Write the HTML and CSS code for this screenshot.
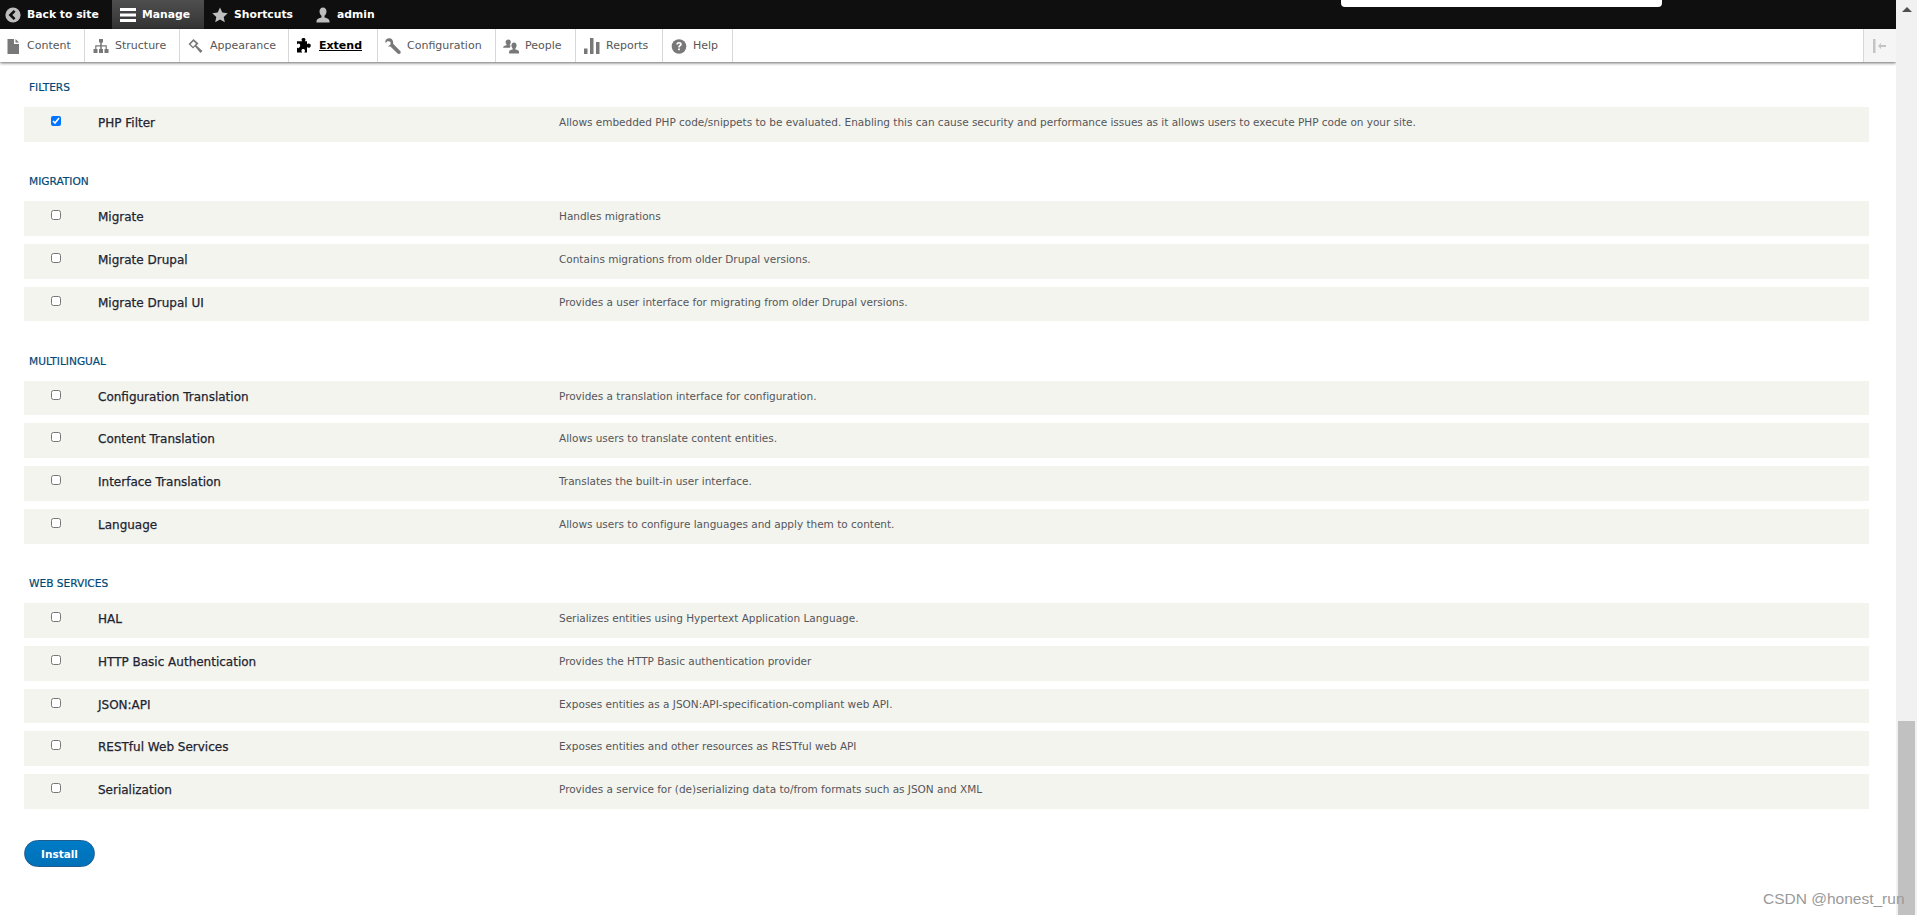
FILE: index.html
```html
<!DOCTYPE html>
<html lang="en">
<head>
  <meta charset="UTF-8" />
  <title>Extend</title>
  <link rel="stylesheet" href="styles.css">
</head>
<body>
  <div class="page">
    <div class="main">

      <!-- TOP BAR -->
      <nav class="toolbar-bar">
        <a class="bar-item bar-back">
          <svg class="bar-icon" viewBox="0 0 16 16"><circle cx="8" cy="8" r="7.6" fill="#bebebe"/><path d="M9.6 3.8 5.4 8l4.2 4.2" fill="none" stroke="#0f0f0f" stroke-width="2.6"/></svg>
          Back to site
        </a>
        <a class="bar-item bar-manage">
          <svg class="bar-icon" viewBox="0 0 16 16"><path d="M0 1h16v3H0zM0 6.500h16v3H0zM0 12h16v3H0z" fill="#fff"/></svg>
          Manage
        </a>
        <a class="bar-item bar-shortcuts">
          <svg class="bar-icon" viewBox="0 0 16 16"><path d="M8 .6l2.300 5 5.400.6-4 3.700 1.100 5.400L8 12.600l-4.800 2.700 1.100-5.400-4-3.700 5.400-.6z" fill="#bebebe"/></svg>
          Shortcuts
        </a>
        <a class="bar-item bar-user">
          <svg class="bar-icon" viewBox="0 0 16 16"><path d="M8 .5c2.200 0 3.500 1.700 3.500 4 0 1.900-.9 3.500-2 4.300v1.700c2.500.6 5 1.500 5 3.500v1.500H1.500V14c0-2 2.500-2.900 5-3.500V8.800c-1.100-.8-2-2.400-2-4.300 0-2.300 1.300-4 3.500-4z" fill="#bebebe"/></svg>
          admin
        </a>
      </nav>
      <div class="search-box"></div>

      <!-- TRAY -->
      <nav class="toolbar-tray">
        <a class="tray-item tray-content">
          <svg class="tray-icon" viewBox="0 0 16 16"><path d="M2.500 1h6.500v5h5v10H2.500zM10.500 1 14 4.600h-3.500z" fill="#787878"/></svg>
          Content
        </a>
        <a class="tray-item tray-structure">
          <svg class="tray-icon" viewBox="0 0 16 16"><path d="M6 1h4v3.500H8.800v2.700h5V11h1.700v4h-4v-4h1.100V8.600H8.800V11H10v4H6v-4h1.200V8.600H3.400V11h1.100v4h-4v-4h1.700V7.200h5V4.500H6z" fill="#787878"/></svg>
          Structure
        </a>
        <a class="tray-item tray-appearance">
          <svg class="tray-icon" viewBox="0 0 16 16"><path d="M5.500 1 0.500 6l4.500 4.500 2-2 5.500 6.500 2-2-6-5.500 2-2zM5.500 3.300 8 5.800 5 8.700 2.600 6.200z" fill="#787878"/></svg>
          Appearance
        </a>
        <a class="tray-item tray-extend is-active">
          <svg class="tray-icon" viewBox="0 0 16 16"><path d="M3 3.200h2.300c-.5-.5-.8-1-.8-1.500C4.500.700 5.300 0 6.500 0s2 .7 2 1.700c0 .5-.3 1-.8 1.500H10v3.100c.5-.5 1-.7 1.500-.7 1.300 0 2.300.9 2.300 2.100s-1 2.100-2.300 2.100c-.5 0-1-.2-1.500-.7v5.300H7.200c.6-.6.8-1.100.8-1.600 0-1-.8-1.700-1.800-1.700s-1.800.7-1.800 1.700c0 .5.200 1 .8 1.600H0v-4.800c.5.400 1 .6 1.500.6C2.500 9.200 3.200 8.400 3.200 7.400S2.500 5.600 1.500 5.600C1 5.600.5 5.800 0 6.200V3.200z" fill="#000"/></svg>
          <span class="tray-label">Extend</span>
        </a>
        <a class="tray-item tray-config">
          <svg class="tray-icon" viewBox="0 0 16 16"><path d="M5 .3C2.800-.2.700 1.200.4 3.300c-.1.600 0 1.200.1 1.700l2.400-2.100 2.700 1-.2 2.800-2.500 1.500C3.400 8.500 4.400 8.700 5.400 8.400L12.600 15.500c.7.700 1.900.7 2.600 0s.7-1.900 0-2.600L8.100 5.800C8.700 3.400 7.200.8 5 .3z" fill="#787878"/></svg>
          Configuration
        </a>
        <a class="tray-item tray-people">
          <svg class="tray-icon" viewBox="0 0 16 16"><path d="M5.500 1.500c1.400 0 2.300 1 2.300 2.400 0 1-.4 1.900-1 2.500v1l1.200.3c-.6.500-1 1.100-1 2H.2V9c0-.8 1.800-1.300 3.400-1.700v-.9c-.6-.6-1-1.500-1-2.500 0-1.400 1.400-2.400 2.900-2.400z" fill="#787878"/><path d="M11 4.500c1.500 0 2.600 1.200 2.600 2.900 0 1.200-.5 2.200-1.200 2.800v1.200c1.700.4 3.600 1 3.600 2V15.500H6.100v-2.100c0-1 1.900-1.600 3.500-2v-1.200C8.900 9.600 8.400 8.600 8.400 7.400c0-1.700 1.100-2.900 2.600-2.900z" fill="#787878"/></svg>
          People
        </a>
        <a class="tray-item tray-reports">
          <svg class="tray-icon" viewBox="0 0 16 16"><path d="M0 10.500h3.500V16H0zM6 0h3.500v16H6zM12 4h3.500v12H12z" fill="#787878"/></svg>
          Reports
        </a>
        <a class="tray-item tray-help">
          <svg class="tray-icon" viewBox="0 0 16 16"><circle cx="8" cy="8.500" r="7.300" fill="#787878"/><path d="M5.300 6.400C5.400 4.800 6.500 4 8.100 4c1.600 0 2.700.9 2.700 2.200 0 1.100-.7 1.600-1.300 2-.5.400-.7.600-.7 1.200H7.200c0-1.100.4-1.600 1-2.100.5-.3.800-.6.800-1 0-.5-.4-.8-.9-.8-.6 0-1 .4-1.100 1zM7.100 10.400h1.800v1.900H7.100z" fill="#fff"/></svg>
          Help
        </a>
        <div class="tray-toggle">
          <svg class="toggle-icon" viewBox="0 0 16 16"><path d="M1 1h2.500v14H1zM6 8l3-3v2h5v2H9v2z" fill="#c4c4c4"/></svg>
        </div>
      </nav>

      <!-- MODULES -->
      <form class="modules">
        <section class="package">
          <h3 class="package-title">Filters</h3>
          <div class="module-row">
            <input type="checkbox" checked>
            <span class="module-name">PHP Filter</span>
            <span class="module-desc">Allows embedded PHP code/snippets to be evaluated. Enabling this can cause security and performance issues as it allows users to execute PHP code on your site.</span>
          </div>
        </section>

        <section class="package">
          <h3 class="package-title">Migration</h3>
          <div class="module-row">
            <input type="checkbox">
            <span class="module-name">Migrate</span>
            <span class="module-desc">Handles migrations</span>
          </div>
          <div class="module-row">
            <input type="checkbox">
            <span class="module-name">Migrate Drupal</span>
            <span class="module-desc">Contains migrations from older Drupal versions.</span>
          </div>
          <div class="module-row">
            <input type="checkbox">
            <span class="module-name">Migrate Drupal UI</span>
            <span class="module-desc">Provides a user interface for migrating from older Drupal versions.</span>
          </div>
        </section>

        <section class="package">
          <h3 class="package-title">Multilingual</h3>
          <div class="module-row">
            <input type="checkbox">
            <span class="module-name">Configuration Translation</span>
            <span class="module-desc">Provides a translation interface for configuration.</span>
          </div>
          <div class="module-row">
            <input type="checkbox">
            <span class="module-name">Content Translation</span>
            <span class="module-desc">Allows users to translate content entities.</span>
          </div>
          <div class="module-row">
            <input type="checkbox">
            <span class="module-name">Interface Translation</span>
            <span class="module-desc">Translates the built-in user interface.</span>
          </div>
          <div class="module-row">
            <input type="checkbox">
            <span class="module-name">Language</span>
            <span class="module-desc">Allows users to configure languages and apply them to content.</span>
          </div>
        </section>

        <section class="package">
          <h3 class="package-title">Web services</h3>
          <div class="module-row">
            <input type="checkbox">
            <span class="module-name">HAL</span>
            <span class="module-desc">Serializes entities using Hypertext Application Language.</span>
          </div>
          <div class="module-row">
            <input type="checkbox">
            <span class="module-name">HTTP Basic Authentication</span>
            <span class="module-desc">Provides the HTTP Basic authentication provider</span>
          </div>
          <div class="module-row">
            <input type="checkbox">
            <span class="module-name">JSON:API</span>
            <span class="module-desc">Exposes entities as a JSON:API-specification-compliant web API.</span>
          </div>
          <div class="module-row">
            <input type="checkbox">
            <span class="module-name">RESTful Web Services</span>
            <span class="module-desc">Exposes entities and other resources as RESTful web API</span>
          </div>
          <div class="module-row">
            <input type="checkbox">
            <span class="module-name">Serialization</span>
            <span class="module-desc">Provides a service for (de)serializing data to/from formats such as JSON and XML</span>
          </div>
        </section>

        <button type="button" class="btn-install">Install</button>
      </form>
    </div>

    <!-- SCROLLBAR -->
    <div class="scrollbar">
      <div class="scroll-arrow"></div>
      <div class="scroll-thumb"></div>
    </div>
  </div>

  <div class="watermark">CSDN @honest_run</div>
</body>
</html>
```

FILE: styles.css
```css
* {
  box-sizing: border-box;
  margin: 0;
  padding: 0;
}
html, body {
  height: 100%;
  overflow: hidden;
}
body {
  background: #fff;
  font-family: "DejaVu Sans", Verdana, sans-serif;
  color: #222330;
}

.page {
  display: flex;
  height: 915px;
}
.main {
  position: relative;
  flex: 1;
  min-width: 0;
}

/* === TOP BAR === */
.toolbar-bar {
  display: flex;
  height: 29px;
  background: #0f0f0f;
}
.bar-item {
  display: flex;
  align-items: center;
  font-size: 10.800px;
  font-weight: 700;
  color: #fff;
  white-space: nowrap;
}
.bar-icon {
  width: 16px;
  height: 16px;
  margin-right: 6px;
}
.bar-back {
  padding-left: 5px;
  width: 112px;
}
.bar-manage {
  padding-left: 8px;
  width: 92px;
  background: linear-gradient(to bottom, #4f4f4f, #333);
}
.bar-shortcuts {
  padding-left: 8px;
  width: 111px;
}
.search-box {
  position: absolute;
  top: 0;
  left: 1341px;
  width: 321px;
  height: 7px;
  background: #fff;
  border-radius: 0 0 4px 4px;
}

/* === TRAY === */
.toolbar-tray {
  display: flex;
  height: 33px;
  background: #fff;
  box-shadow: 0 1px 3px rgba(0,0,0,0.6);
  position: relative;
}
.tray-item {
  display: flex;
  align-items: center;
  padding-left: 8px;
  border-right: 1px solid #d8d8d8;
  font-size: 11px;
  color: #565656;
  white-space: nowrap;
}
.tray-icon {
  width: 16px;
  height: 16px;
  margin-right: 6px;
}
.tray-content { width: 85px; padding-left: 5px; }
.tray-structure { width: 95px; }
.tray-appearance { width: 109px; }
.tray-extend { width: 89px; }
.tray-config { width: 118px; padding-left: 7px; }
.tray-people { width: 80px; padding-left: 7px; }
.tray-reports { width: 87px; }
.tray-help { width: 70px; }
.tray-item.is-active {
  color: #000;
  font-weight: 700;
}
.tray-label {
  text-decoration: underline;
}
.tray-toggle {
  display: flex;
  align-items: center;
  justify-content: center;
  width: 33px;
  margin-left: auto;
  background: #f5f5f5;
  border-left: 1px solid #d8d8d8;
}
.toggle-icon {
  width: 16px;
  height: 16px;
}

/* === MODULES === */
.modules {
  padding: 17px 27px 0 24px;
}
.package {
  margin-bottom: 31.200px;
}
.package-title {
  margin: 0 0 11px 5px;
  font-size: 10.600px;
  line-height: 17px;
  font-weight: 400;
  text-transform: uppercase;
  color: #004875;
  -webkit-text-stroke: 0.2px #004875;
}
.module-row {
  display: flex;
  align-items: flex-start;
  height: 34.800px;
  margin-bottom: 8px;
  background: #f3f4ee;
}
.module-row:last-child {
  margin-bottom: 0;
}
.module-row input {
  width: 10px;
  height: 10px;
  margin: 9px 0 0 27px;
  flex: none;
}
.module-name {
  width: 461px;
  margin-left: 37px;
  flex: none;
  font-size: 12px;
  line-height: 33px;
  color: #222330;
  -webkit-text-stroke: 0.25px #222330;
}
.module-desc {
  font-size: 10.500px;
  line-height: 31px;
  letter-spacing: -0.015px;
  color: #55565b;
  white-space: nowrap;
}

.btn-install {
  display: block;
  width: 71px;
  height: 27px;
  margin-top: 2px;
  border: 1px solid #1e5c90;
  border-radius: 14px;
  background: linear-gradient(to bottom, #007bc6, #0071b8);
  color: #fff;
  font-family: inherit;
  font-size: 10.500px;
  font-weight: 700;
}

/* === SCROLLBAR === */
.scrollbar {
  position: relative;
  flex: none;
  width: 21px;
  background: #f1f1f1;
}
.scroll-arrow {
  width: 0;
  height: 0;
  margin: 7px auto 0;
  border-left: 5px solid transparent;
  border-right: 5px solid transparent;
  border-bottom: 5px solid #505050;
}
.scroll-thumb {
  position: absolute;
  top: 721px;
  bottom: 0;
  left: 2px;
  right: 2px;
  background: #c1c1c1;
}

.watermark {
  position: absolute;
  top: 890px;
  left: 1763px;
  font-family: "Liberation Sans", Arial, sans-serif;
  font-size: 15.500px;
  color: #9a9a9a;
  white-space: nowrap;
}
```
